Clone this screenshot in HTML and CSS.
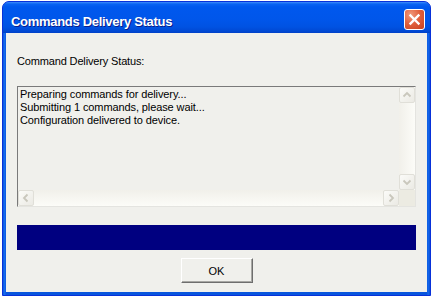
FILE: index.html
```html
<!DOCTYPE html>
<html>
<head>
<meta charset="utf-8">
<link rel="stylesheet" href="styles.css">
</head>
<body>
<div class="window">
  <div class="titlebar">
    <span class="title">Commands Delivery Status</span>
    <span class="close">
      <svg width="19" height="19" viewBox="0 0 19 19"><path d="M5.5 5.5 L13.5 13.5 M13.5 5.5 L5.5 13.5" stroke="#fff" stroke-width="2.4" stroke-linecap="square" fill="none"/></svg>
    </span>
  </div>
  <div class="frame">
    <div class="client">
      <div class="label">Command Delivery Status:</div>
      <div class="log">
        <div class="log-text">
          <div>Preparing commands for delivery...</div>
          <div>Submitting 1 commands, please wait...</div>
          <div>Configuration delivered to device.</div>
        </div>
        <div class="vscroll">
          <div class="sbtn"><svg width="14" height="14" viewBox="0 0 14 14"><polyline points="3.5,8.5 7,5 10.5,8.5" class="chev"/></svg></div>
          <div class="vtrack"></div>
          <div class="sbtn"><svg width="14" height="14" viewBox="0 0 14 14"><polyline points="3.5,5.5 7,9 10.5,5.5" class="chev"/></svg></div>
        </div>
        <div class="hscroll">
          <div class="sbtn"><svg width="14" height="14" viewBox="0 0 14 14"><polyline points="8.5,3.5 5,7 8.5,10.5" class="chev"/></svg></div>
          <div class="htrack"></div>
          <div class="sbtn"><svg width="14" height="14" viewBox="0 0 14 14"><polyline points="5.5,3.5 9,7 5.5,10.5" class="chev"/></svg></div>
        </div>
        <div class="corner"></div>
      </div>
      <div class="progress"></div>
      <div class="actions"><button class="btn">OK</button></div>
    </div>
  </div>
</div>
</body>
</html>
```

FILE: styles.css
```css
html, body {
  margin: 0;
  padding: 0;
  background: #ffffff;
}
body {
  padding: 1px 0 0 2px;
  font-family: "Liberation Sans", Arial, sans-serif;
}
.window {
  box-sizing: border-box;
  width: 429px;
  height: 295px;
  border: 1px solid #0831d9;
  border-radius: 7px 7px 0 0;
  background: #1660e8;
  display: flex;
  flex-direction: column;
  overflow: hidden;
}
.titlebar {
  height: 31px;
  flex: none;
  display: flex;
  justify-content: space-between;
  align-items: flex-start;
  background: linear-gradient(#3d8dfc 0px, #0a64f2 2px, #0058ee 5px, #0056ea 18px, #0052e2 25px, #0049d4 29px, #0040c8 31px);
}
.title {
  padding: 12px 0 0 8px;
  font-size: 13px;
  line-height: 15px;
  font-weight: bold;
  letter-spacing: -0.3px;
  color: #ffffff;
  text-shadow: 1px 1px 0 #0a1e8c;
}
.close {
  box-sizing: border-box;
  width: 21px;
  height: 21px;
  margin: 7px 5px 0 0;
  border: 1px solid #ffffff;
  border-radius: 3px;
  background: radial-gradient(circle at 30% 25%, #f09a7c 0%, #e2623f 45%, #c8401e 100%);
  display: flex;
  align-items: center;
  justify-content: center;
}
.close svg {
  display: block;
}
.frame {
  flex: 1;
  padding: 0 3px 3px 3px;
  display: flex;
  background: linear-gradient(to right, #0a4fd8 0, #166aee 1px, #166aee 2px, #0855dd 3px, #0855dd calc(100% - 3px), #166aee calc(100% - 2px), #0a4fd8 100%);
}
.client {
  flex: 1;
  background: #f0f0ec;
  padding: 22px 11px 0 11px;
  display: flex;
  flex-direction: column;
  font-size: 11px;
  line-height: 13px;
  color: #000000;
}
.label {
  height: 13px;
  margin-bottom: 18px;
  letter-spacing: -0.15px;
}
.log {
  box-sizing: border-box;
  height: 121px;
  border: 1px solid;
  border-color: #7a7a7a #e4e4e0 #e4e4e0 #7a7a7a;
  display: grid;
  grid-template-columns: 1fr 16px;
  grid-template-rows: 1fr 16px;
  background: #f0f0ec;
}
.log-text {
  padding: 1px 0 0 2px;
  overflow: hidden;
  white-space: nowrap;
  letter-spacing: -0.1px;
}
.vscroll {
  display: flex;
  flex-direction: column;
  background: linear-gradient(to right, #f1f0ea, #fcfcf8);
}
.vtrack {
  flex: 1;
}
.hscroll {
  display: flex;
  background: linear-gradient(#f1f0ea, #fcfcf8);
}
.htrack {
  flex: 1;
}
.sbtn {
  box-sizing: border-box;
  width: 16px;
  height: 16px;
  border: 1px solid #e0dfd8;
  border-radius: 2px;
  background: linear-gradient(135deg, #fbfbf8, #ebeae4);
  display: flex;
  align-items: center;
  justify-content: center;
}
.sbtn svg {
  display: block;
}
.chev {
  fill: none;
  stroke: #c9c7bc;
  stroke-width: 1.8;
}
.corner {
  background: #ecebe2;
}
.progress {
  height: 25px;
  margin-top: 18px;
  background: #000080;
}
.actions {
  margin-top: 8px;
  display: flex;
  justify-content: center;
}
.btn {
  box-sizing: border-box;
  width: 72px;
  height: 25px;
  margin: 0;
  padding: 0;
  border: 1px solid;
  border-color: #ffffff #6e6e6e #6e6e6e #ffffff;
  box-shadow: inset -1px -1px 0 #a8a8a4;
  background: #f0f0ec;
  font-family: "Liberation Sans", Arial, sans-serif;
  font-size: 11px;
  color: #000000;
}
```
